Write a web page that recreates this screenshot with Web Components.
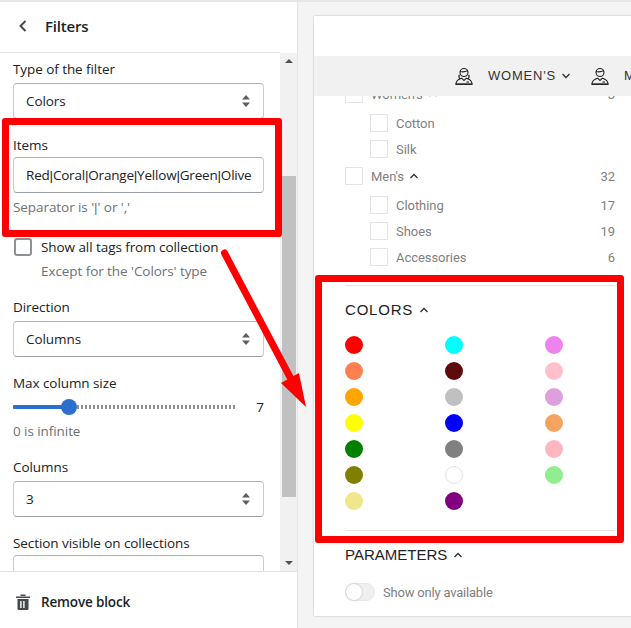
<!DOCTYPE html>
<html>
<head>
<meta charset="utf-8">
<title>Filters</title>
<style>
    html, body { margin: 0; height: 100%; overflow: hidden; }
    body { font-family: "Open Sans", "Noto Sans", sans-serif; }
</style>
</head>
<body>
<editor-app>
    <filters-panel slot="panel">
        <field-select label="Type of the filter" value="Colors"></field-select>
        <field-input label="Items" value="Red|Coral|Orange|Yellow|Green|Olive" hint="Separator is '|' or ','"></field-input>
        <field-check label="Show all tags from collection" hint="Except for the 'Colors' type"></field-check>
        <field-select label="Direction" value="Columns"></field-select>
        <field-range label="Max column size" value="7" hint="0 is infinite"></field-range>
        <field-select label="Columns" value="3"></field-select>
        <field-select tight label="Section visible on collections" value=""></field-select>
    </filters-panel>
    <shop-preview slot="preview"></shop-preview>
</editor-app>

<script>
const chevronUp = `<svg width="10" height="6" viewBox="0 0 10 6"><path d="M1.5 5 L5 1.5 L8.5 5" fill="none" stroke="#333" stroke-width="1.4"/></svg>`;
const chevronDown = `<svg width="10" height="6" viewBox="0 0 10 6"><path d="M1.5 1 L5 4.5 L8.5 1" fill="none" stroke="#333" stroke-width="1.4"/></svg>`;

// the two little people in the nav, same body, different hair
function personIcon(long) {
    const hair = long
        ? `<path d="M5 12c-1-1-1.5-3-.5-4M13 12c1-1 1.5-3 .5-4" fill="none" stroke="#222" stroke-width="1.3"/>`
        : '';
    return `<svg width="18" height="18" viewBox="0 0 18 18" fill="none" stroke="#222" stroke-width="1.1">
        <circle cx="9" cy="5.5" r="4"/>
        <path d="M5 4.5 Q9 5.5 13 3.6" />
        ${hair}
        <path d="M1 17 C1 13.5 3 12.2 6.5 11.2 L9 13.5 L11.5 11.2 C15 12.2 17 13.5 17 17 Z"/>
        <path d="M0.5 17.3 H17.5" stroke-width="1.3"/>
        <path d="M11.5 15 H14" />
    </svg>`;
}

// the pipes come out far too wide in Open Sans
function thinPipes(text) {
    return text.replace(/\|/g, '<span style="font-family:\'Liberation Sans\',sans-serif">|</span>');
}

class EditorApp extends HTMLElement {
    constructor() {
        super();
        this.attachShadow({ mode: 'open' });
        this.shadowRoot.innerHTML = `
            <style>
                :host { display: flex; position: relative; width: 631px; height: 628px; overflow: hidden; background: #f4f4f4; }
                ::slotted([slot=panel]) { flex: 0 0 298px; }
                ::slotted([slot=preview]) { flex: 1; min-width: 0; }
                .strip { position: absolute; left: 0; right: 0; top: 0; height: 2px; background: #e6e6e6; }
                .red { position: absolute; box-sizing: border-box; border: 7px solid #f00; border-radius: 3px; }
                .one { left: 2px; top: 118px; width: 280px; height: 119px; }
                .two { left: 315px; top: 275px; width: 309px; height: 268px; }
                svg { position: absolute; left: 0; top: 0; }
            </style>
            <slot name="panel"></slot>
            <slot name="preview"></slot>
            <div class="strip"></div>
            <div class="red one"></div>
            <div class="red two"></div>
            <svg width="631" height="628">
                <path d="M224.5 253 L291 379" stroke="#f00" stroke-width="7" stroke-linecap="round" fill="none"/>
                <path d="M281 383 L299 373 L306 407 Z" fill="#f00"/>
            </svg>
        `;
    }
}

class FiltersPanel extends HTMLElement {
    constructor() {
        super();
        this.attachShadow({ mode: 'open' });
        this.shadowRoot.innerHTML = `
            <style>
                :host { display: flex; flex-direction: column; height: 628px; background: #fff; border-right: 1px solid #e1e3e5; box-sizing: border-box; color: #202223; font-size: 13.5px; letter-spacing: -.07px; }
                header { flex: 0 0 51px; display: flex; align-items: center; gap: 17px; padding: 0 0 2px 18px; margin-top: 2px; box-sizing: border-box; width: 280px; border-bottom: 1px solid #e1e3e5; height: 51px; }
                header span { font-size: 15px; font-weight: 600; letter-spacing: -.2px; }
                .middle { flex: 1; min-height: 0; display: flex; }
                .scroll { flex: 1; min-width: 0; overflow: hidden; padding: 6px 16px 0 13px; display: flex; flex-direction: column; gap: 16px; }
                .bar { flex: 0 0 17px; background: #f1f1f1; display: flex; flex-direction: column; justify-content: space-between; align-items: center; padding: 6px 0; box-sizing: border-box; position: relative; }
                .arrow { width: 0; height: 0; border: 4px solid transparent; }
                .arrow.up { border-bottom: 4px solid #505050; border-top: 0; }
                .arrow.down { border-top: 4px solid #505050; border-bottom: 0; }
                .thumb { position: absolute; left: 2px; right: 1px; top: 123px; height: 321px; background: #c1c1c1; }
                footer { flex: 0 0 57px; border-top: 1px solid #e1e3e5; display: flex; align-items: center; gap: 11px; padding: 3px 0 0 16px; font-weight: 600; letter-spacing: -.15px; box-sizing: border-box; }
            </style>
            <header>
                <svg width="10" height="14" viewBox="0 0 10 14"><path d="M7.5 2 L2.5 7 L7.5 12" fill="none" stroke="#44494e" stroke-width="2"/></svg>
                <span>Filters</span>
            </header>
            <div class="middle">
                <div class="scroll"><slot></slot></div>
                <div class="bar"><i class="arrow up"></i><i class="thumb"></i><i class="arrow down"></i></div>
            </div>
            <footer>
                <svg width="14" height="16" viewBox="0 0 14 16" fill="#44494e"><path d="M0 2.5h14v1.6H0zM4.5.5h5v1.6h-5zM1.5 5h11v10a1 1 0 0 1-1 1h-9a1 1 0 0 1-1-1zM4.2 7v7h1.4V7zm3 0v7h1.4V7z" fill-rule="evenodd"/></svg>
                <span>Remove block</span>
            </footer>
        `;
    }
}

// shared by the form fields
const fieldStyle = `
    :host { display: block; flex: none; }
    label { display: block; line-height: 20px; margin-bottom: 4px; }
    :host([tight]) label { margin-bottom: 2px; }
    .box { box-sizing: border-box; width: 251px; height: 36px; border: 1px solid #c4cdd5; border-top-color: #aeb4b9; border-bottom-color: #9aa0a5; border-radius: 4px; background: #fff; display: flex; align-items: center; padding: 0 12px; position: relative; }
    .hint { color: #6d7175; line-height: 20px; margin-top: 4px; }
`;

class FieldSelect extends HTMLElement {
    constructor() {
        super();
        this.attachShadow({ mode: 'open' });
    }
    connectedCallback() {
        // the last one runs under the footer, its arrows are out of view
        const arrows = this.hasAttribute('tight') ? '' :
            `<svg width="10" height="14" viewBox="0 0 10 14" fill="#5c5f62"><path d="M5 1 L9 5.5 H1 Z M5 13 L1 8.5 H9 Z"/></svg>`;
        this.shadowRoot.innerHTML = `
            <style>${fieldStyle}
                svg { position: absolute; right: 12px; top: 10px; }
            </style>
            <label>${this.getAttribute('label')}</label>
            <div class="box"><span>${this.getAttribute('value')}</span>${arrows}</div>
        `;
    }
}

class FieldInput extends HTMLElement {
    constructor() {
        super();
        this.attachShadow({ mode: 'open' });
    }
    connectedCallback() {
        this.shadowRoot.innerHTML = `
            <style>${fieldStyle}
                label { margin-bottom: 2px; }
                .box span { letter-spacing: -.2px; white-space: nowrap; }
            </style>
            <label>${this.getAttribute('label')}</label>
            <div class="box"><span>${thinPipes(this.getAttribute('value'))}</span></div>
            <div class="hint">${thinPipes(this.getAttribute('hint'))}</div>
        `;
    }
}

class FieldCheck extends HTMLElement {
    constructor() {
        super();
        this.attachShadow({ mode: 'open' });
    }
    connectedCallback() {
        this.shadowRoot.innerHTML = `
            <style>${fieldStyle}
                :host { margin-top: 4px; }
                .row { display: flex; gap: 9px; align-items: center; padding-left: 1px; height: 18px; }
                i { box-sizing: border-box; width: 18px; height: 18px; border: 2px solid #8c9196; border-radius: 3px; }
                .hint { padding-left: 28px; margin-top: 5px; }
            </style>
            <div class="row"><i></i><span>${this.getAttribute('label')}</span></div>
            <div class="hint">${this.getAttribute('hint')}</div>
        `;
    }
}

class FieldRange extends HTMLElement {
    constructor() {
        super();
        this.attachShadow({ mode: 'open' });
    }
    connectedCallback() {
        this.shadowRoot.innerHTML = `
            <style>${fieldStyle}
                label { margin-bottom: 2px; }
                .row { display: flex; align-items: center; height: 24px; width: 251px; }
                .track { position: relative; width: 223px; height: 4px; background: repeating-linear-gradient(90deg, #8c9196 0 2px, transparent 2px 4px); }
                .fill { position: absolute; left: 0; top: 0; width: 56px; height: 4px; border-radius: 2px; background: #2c6ecb; }
                .knob { position: absolute; left: 48px; top: -6px; width: 16px; height: 16px; border-radius: 50%; background: #2c6ecb; }
                output { margin-left: auto; }
                .hint { margin-top: 2px; }
            </style>
            <label>${this.getAttribute('label')}</label>
            <div class="row"><div class="track"><div class="fill"></div><div class="knob"></div></div><output>${this.getAttribute('value')}</output></div>
            <div class="hint">${this.getAttribute('hint')}</div>
        `;
    }
}

class FilterRow extends HTMLElement {
    constructor() {
        super();
        this.attachShadow({ mode: 'open' });
        this.shadowRoot.innerHTML = `
            <style>
                :host { display: flex; align-items: center; height: 18px; color: #7f7f7f; font-size: 13px; letter-spacing: -.05px; }
                :host([sub]) { padding-left: 25px; }
                i { box-sizing: border-box; width: 18px; height: 18px; border: 1px solid #e3e3e3; margin-right: 8px; flex: none; }
                b { font-weight: 400; margin-left: auto; }
                span { display: flex; margin-left: 5px; }
            </style>
            <i></i><slot></slot><span id="chev"></span><b></b>
        `;
    }
    connectedCallback() {
        this.shadowRoot.querySelector('b').textContent = this.getAttribute('count') || '';
        if (this.hasAttribute('open')) {
            this.shadowRoot.getElementById('chev').innerHTML = chevronUp;
        }
    }
}

class ColorDot extends HTMLElement {
    constructor() {
        super();
        this.attachShadow({ mode: 'open' });
        this.shadowRoot.innerHTML = `
            <style>
                :host { display: block; box-sizing: border-box; width: 18px; height: 18px; border-radius: 50%; }
                :host([ring]) { border: 1px solid #e3e3e3; }
            </style>
        `;
    }
    connectedCallback() {
        this.style.background = this.getAttribute('color');
    }
}

class SectionTitle extends HTMLElement {
    constructor() {
        super();
        this.attachShadow({ mode: 'open' });
        this.shadowRoot.innerHTML = `
            <style>
                :host { display: flex; align-items: center; gap: 6px; color: #222; font-family: "Liberation Sans", Arial, sans-serif; font-size: 15px; line-height: 20px; }
            </style>
            <slot></slot>${chevronUp}
        `;
    }
}

class ShopPreview extends HTMLElement {
    constructor() {
        super();
        this.attachShadow({ mode: 'open' });
        const colors = ['red','coral','orange','yellow','green','olive','khaki',
            'cyan','#5e0b0b','silver','blue','gray','white','purple',
            'violet','pink','plum','sandybrown','lightpink','lightgreen'];
        const dots = colors.map(c => `<color-dot color="${c}"${c === 'white' ? ' ring' : ''}></color-dot>`).join('');
        this.shadowRoot.innerHTML = `
            <style>
                :host { display: block; padding: 16px 0 0 16px; height: 628px; box-sizing: border-box; overflow: hidden; font-family: Roboto, "Liberation Sans", sans-serif; }
                .card { background: #fff; width: 340px; height: 600px; box-shadow: 0 0 2px rgba(0,0,0,.25); overflow: hidden; }
                .top { height: 40px; }
                nav { position: relative; z-index: 1; height: 40px; background: #f1f1f1; display: flex; align-items: center; padding-left: 141px; color: #333; font-family: "Liberation Sans", Arial, sans-serif; font-size: 13px; letter-spacing: .8px; white-space: nowrap; padding-bottom: 1px; box-sizing: border-box; }
                nav svg { flex: none; }
                nav .label { margin-left: 15px; }
                nav .c { margin: 0 20px 0 5px; display: flex; }
                .list { margin: -11px 0 0; padding: 0 16px 0 31px; width: 270px; display: flex; flex-direction: column; gap: 8px; }
                filter-row[top] { margin-bottom: 3px; }
                filter-row[men] { margin: 1px 0 3px; }
                hr { border: 0; height: 1px; background: #e3e3e3; margin: 0; }
                .body { padding: 0 0 0 31px; width: 270px; }
                .body section-title { margin-top: 14px; }
                .colors { letter-spacing: .8px; }
                .dots { display: grid; grid-template-rows: repeat(7, 18px); grid-auto-flow: column; grid-auto-columns: 100px; row-gap: 8px; margin: 16px 0 20px; }
                .toggle { display: flex; align-items: center; gap: 8px; margin-top: 18px; color: #7f7f7f; font-size: 13px; letter-spacing: -.2px; }
                .sw { width: 30px; height: 18px; border-radius: 9px; background: #f0f0f0; border: 1px solid #e8e8e8; box-sizing: border-box; position: relative; }
                .sw::after { content: ""; position: absolute; left: 0; top: 0; width: 16px; height: 16px; border-radius: 50%; background: #fff; box-shadow: 0 0 2px rgba(0,0,0,.3); }
            </style>
            <div class="card">
                <div class="top"></div>
                <nav>
                    ${personIcon(true)}<span class="label">WOMEN'S</span><span class="c">${chevronDown}</span>
                    ${personIcon(false)}<span class="label">MEN'S</span>
                </nav>
                <div class="list">
                    <filter-row count="3" open top>Women's</filter-row>
                    <filter-row sub>Cotton</filter-row>
                    <filter-row sub>Silk</filter-row>
                    <filter-row count="32" open men>Men's</filter-row>
                    <filter-row sub count="17">Clothing</filter-row>
                    <filter-row sub count="19">Shoes</filter-row>
                    <filter-row sub count="6">Accessories</filter-row>
                </div>
                <div class="body">
                    <hr style="margin-top:19px">
                    <section-title class="colors">COLORS</section-title>
                    <div class="dots">${dots}</div>
                    <hr>
                    <section-title>PARAMETERS</section-title>
                    <div class="toggle"><span class="sw"></span><span>Show only available</span></div>
                </div>
            </div>
        `;
    }
}

// children first so upgrades inside shadow roots find them defined
customElements.define('color-dot', ColorDot);
customElements.define('filter-row', FilterRow);
customElements.define('section-title', SectionTitle);
customElements.define('field-select', FieldSelect);
customElements.define('field-input', FieldInput);
customElements.define('field-check', FieldCheck);
customElements.define('field-range', FieldRange);
customElements.define('filters-panel', FiltersPanel);
customElements.define('shop-preview', ShopPreview);
customElements.define('editor-app', EditorApp);
</script>
</body>
</html>
